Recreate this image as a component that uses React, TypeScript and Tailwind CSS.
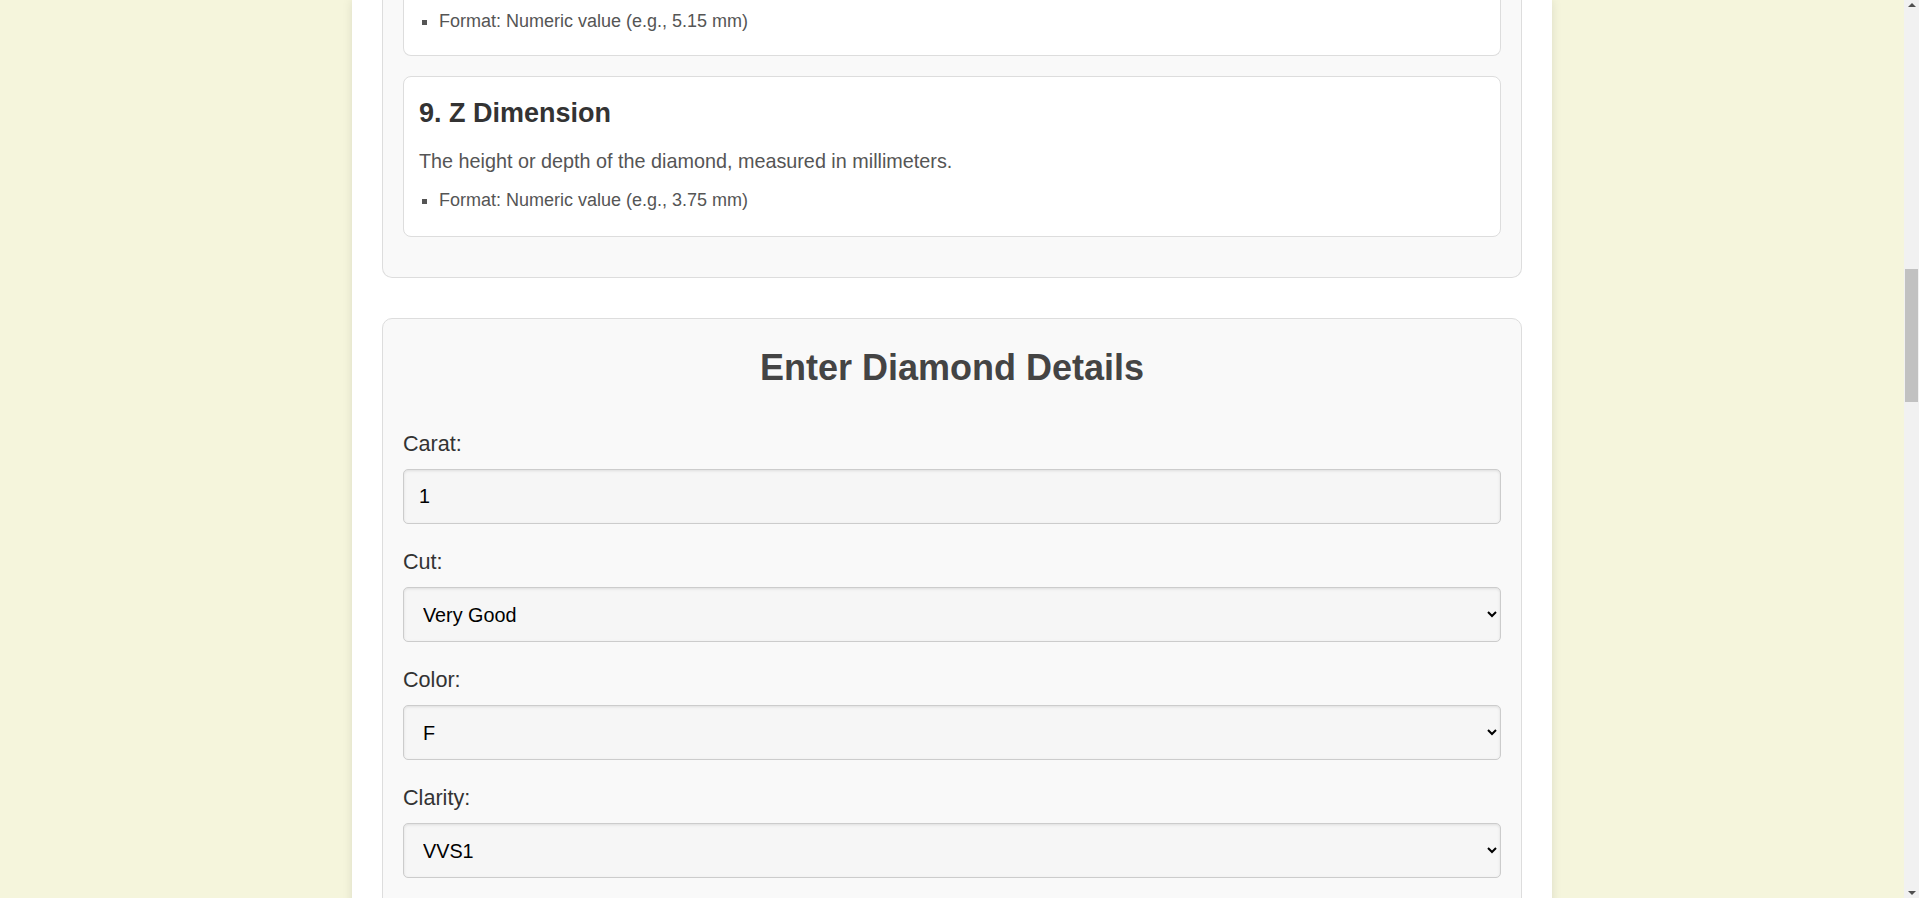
const cutOptions = ["Fair", "Good", "Very Good", "Premium", "Ideal"];
const colorOptions = ["D", "E", "F", "G", "H", "I", "J"];
const clarityOptions = ["I1", "SI2", "SI1", "VS2", "VS1", "VVS2", "VVS1", "IF"];

const labelClass = "block text-[21.6px] leading-[35px] text-[#333] mb-[8px]";
const controlClass =
  "block w-full h-[55px] mb-5 px-[15px] text-[19.8px] text-black bg-[#f6f6f6] border border-[#ccc] rounded-[5px] shadow-[inset_0_1px_3px_rgba(0,0,0,0.1)]";

function Scrollbar() {
  return (
    <div className="fixed top-0 right-0 z-10 flex h-screen w-[15px] flex-col items-center bg-[#f1f1f1]">
      <div className="mt-[3px] h-0 w-0 border-x-[4px] border-b-[4px] border-x-transparent border-b-[#505050]" />
      <div className="mt-[262px] h-[133px] w-[13px] bg-[#c1c1c1]" />
      <div className="mt-auto mb-[3px] h-0 w-0 border-x-[4px] border-t-[4px] border-x-transparent border-t-[#505050]" />
    </div>
  );
}

export default function App() {
  return (
    <div className="min-h-screen bg-[#f5f5dc] pr-[15px] font-['Liberation_Sans',Arial,sans-serif]">
      <Scrollbar />
      <div className="mx-auto max-w-[1200px] bg-white px-[30px] pb-10 shadow-[0_0_10px_rgba(0,0,0,0.1)]">
        {/* Attribute guide (scrolled, top cut off) */}
        <section className="rounded-b-[10px] border border-t-0 border-[#ddd] bg-[#f9f9f9] px-5 pb-5">
          <div className="rounded-b-lg border border-t-0 border-[#ddd] bg-white px-[15px] pt-[7px] pb-[19px]">
            <ul className="list-[square] pl-5 text-[18px] leading-[29px] text-[#555]">
              <li>Format: Numeric value (e.g., 5.15 mm)</li>
            </ul>
          </div>

          <div className="mt-5 mb-5 rounded-lg border border-[#ddd] bg-white px-[15px] pt-[15px] pb-[21px]">
            <h3 className="text-[27px] leading-[43px] font-bold text-[#333]">9. Z Dimension</h3>
            <p className="mt-[10px] text-[19.8px] leading-[32px] text-[#555]">
              The height or depth of the diamond, measured in millimeters.
            </p>
            <ul className="mt-[9px] list-[square] pl-5 text-[18px] leading-[29px] text-[#555]">
              <li>Format: Numeric value (e.g., 3.75 mm)</li>
            </ul>
          </div>
        </section>

        {/* Form */}
        <section className="mt-10 rounded-[10px] border border-[#ddd] bg-[#f9f9f9] p-5">
          <h2 className="mb-[29px] text-center text-[36px] leading-[58px] font-bold text-[#444]">
            Enter Diamond Details
          </h2>
          <form onSubmit={(e) => e.preventDefault()}>
            <label htmlFor="carat" className={labelClass}>Carat:</label>
            <input id="carat" type="text" defaultValue="1" className={controlClass} />

            <label htmlFor="cut" className={labelClass}>Cut:</label>
            <select id="cut" defaultValue="Very Good" className={controlClass}>
              {cutOptions.map((o) => (
                <option key={o}>{o}</option>
              ))}
            </select>

            <label htmlFor="color" className={labelClass}>Color:</label>
            <select id="color" defaultValue="F" className={controlClass}>
              {colorOptions.map((o) => (
                <option key={o}>{o}</option>
              ))}
            </select>

            <label htmlFor="clarity" className={labelClass}>Clarity:</label>
            <select id="clarity" defaultValue="VVS1" className={controlClass}>
              {clarityOptions.map((o) => (
                <option key={o}>{o}</option>
              ))}
            </select>

            <label htmlFor="depth" className={labelClass}>Depth:</label>
            <input id="depth" type="text" defaultValue="61.5" className={controlClass} />

            <label htmlFor="table" className={labelClass}>Table:</label>
            <input id="table" type="text" defaultValue="55" className={controlClass} />

            <button
              type="submit"
              className="w-full rounded-[5px] bg-[#444] py-[15px] text-[19.8px] font-bold text-white"
            >
              Predict Price
            </button>
          </form>
        </section>
      </div>
    </div>
  );
}
